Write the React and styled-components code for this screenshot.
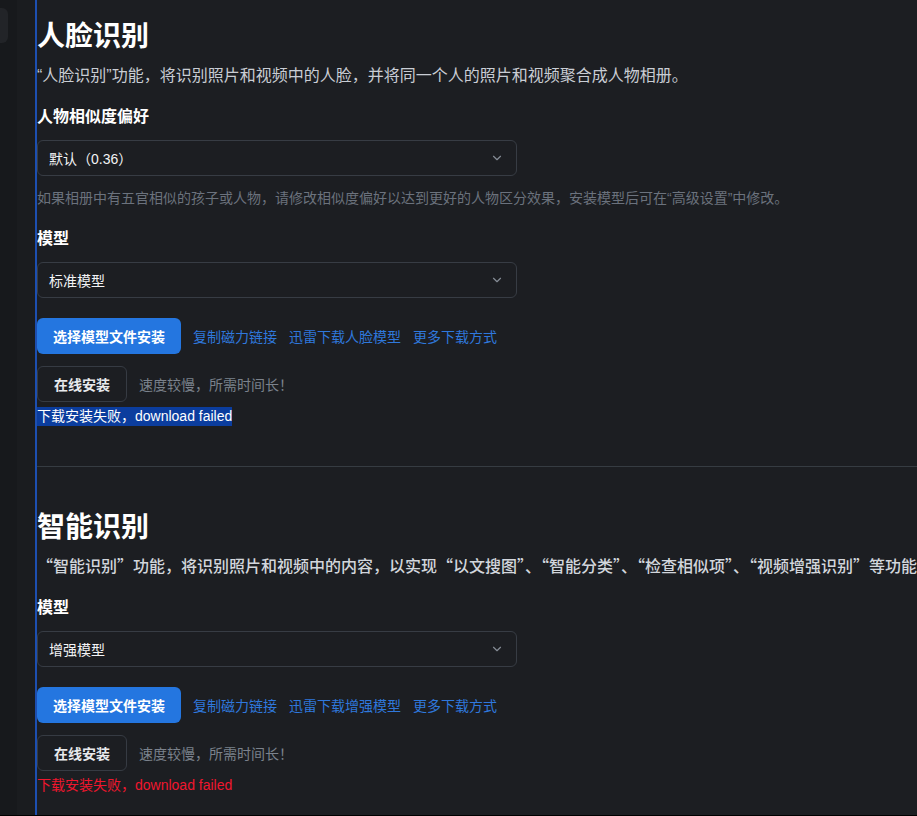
import styled, { createGlobalStyle } from 'styled-components'
import { ChevronDown } from 'lucide-react'

const GlobalStyle = createGlobalStyle`
  html, body {
    margin: 0;
    padding: 0;
    background: #000;
  }
  body {
    font-family: "Liberation Sans", "Noto Sans CJK SC", sans-serif;
    color: #e6e8eb;
  }
`

//////////
// Frame
const Frame = styled.div`
  display: flex;
  height: 815px;
  overflow: hidden;
  background: #1c1e22;
`
const SideRail = styled.div`
  width: 17px;
  flex: none;
  background: #17191c;
  padding-top: 8px;
  box-sizing: border-box;
`
const RailItem = styled.div`
  width: 8px;
  height: 35px;
  background: #222428;
  border-radius: 0 6px 6px 0;
`
const Gutter = styled.div`
  width: 18px;
  flex: none;
  background: #1a1c1f;
`
const Main = styled.div`
  flex: 1;
  min-width: 0;
  border-left: 2px solid #1d4fb0;
  background: #1c1e22;
  overflow: hidden;
`

//////////
// Section
const Section = styled.section`
  padding-top: ${(props) => props.top}px;
`
const Title = styled.h1`
  margin: 0;
  font-size: 28px;
  line-height: 40px;
  font-weight: 700;
  color: #fff;
`
const Desc = styled.p`
  margin: ${(props) => props.mt}px 0 0;
  font-size: 16px;
  line-height: 24px;
  color: ${(props) => (props.wide ? '#d2d6dc' : '#c9cdd4')};
  font-weight: ${(props) => (props.wide ? 500 : 400)};
  white-space: nowrap;
  font-family: ${(props) => (props.wide
    ? '"Noto Sans CJK SC", sans-serif'
    : '"Liberation Sans", "Noto Sans CJK SC", sans-serif')};
`
const Label = styled.div`
  margin-top: ${(props) => props.mt}px;
  font-size: 16px;
  line-height: 24px;
  font-weight: 700;
  color: #fff;
`
const Hint = styled.div`
  margin-top: 10px;
  font-size: 14px;
  line-height: 24px;
  color: #6b727d;
  white-space: nowrap;
`

// Select
const SelectBox = styled.div`
  margin-top: 11px;
  width: 480px;
  height: 36px;
  box-sizing: border-box;
  border: 1px solid #373c44;
  border-radius: 6px;
  padding: 0 12px 0 11px;
  display: flex;
  align-items: center;
  justify-content: space-between;
  font-size: 14px;
  color: #f2f3f5;
  & svg {
    color: #858c96;
  }
`

// Buttons
const ActionRow = styled.div`
  margin-top: ${(props) => props.mt}px;
  display: flex;
  align-items: center;
  gap: 12px;
`
const PrimaryButton = styled.button`
  height: 36px;
  padding: 0 16px;
  border: none;
  border-radius: 6px;
  background: #2476e0;
  color: #fff;
  font-family: inherit;
  font-size: 14px;
  font-weight: 700;
`
const GhostButton = styled.button`
  height: 36px;
  padding: 0 16px;
  border: 1px solid #363b43;
  border-radius: 6px;
  background: transparent;
  color: #e8eaed;
  font-family: inherit;
  font-size: 14px;
  font-weight: 700;
`
const LinkText = styled.a`
  font-size: 14px;
  color: #2f78dc;
  text-decoration: none;
`
const Muted = styled.span`
  font-size: 14px;
  color: #7b828c;
`
const ErrorText = styled.div`
  margin-top: ${(props) => props.mt}px;
  font-size: 14px;
  line-height: ${(props) => (props.selected ? 19 : 20)}px;
  & span {
    display: inline-block;
    color: ${(props) => (props.selected ? '#fff' : '#f0162e')};
    background: ${(props) => (props.selected ? '#0b3d9e' : 'transparent')};
  }
`
const Divider = styled.hr`
  margin: 40px 0 0;
  border: none;
  border-top: 1px solid #363c42;
`

const Select = ({ value }) => (
  <SelectBox>
    <span>{value}</span>
    <ChevronDown size={14} strokeWidth={2} />
  </SelectBox>
)

function App() {
  return (
    <>
      <GlobalStyle />
      <Frame>
        <SideRail><RailItem /></SideRail>
        <Gutter />
        <Main>
          <Section top={17}>
            <Title>人脸识别</Title>
            <Desc mt={7}>“人脸识别”功能，将识别照片和视频中的人脸，并将同一个人的照片和视频聚合成人物相册。</Desc>
            <Label mt={17}>人物相似度偏好</Label>
            <Select value="默认（0.36）" />
            <Hint>如果相册中有五官相似的孩子或人物，请修改相似度偏好以达到更好的人物区分效果，安装模型后可在“高级设置”中修改。</Hint>
            <Label mt={17}>模型</Label>
            <Select value="标准模型" />
            <ActionRow mt={20}>
              <PrimaryButton>选择模型文件安装</PrimaryButton>
              <LinkText>复制磁力链接</LinkText>
              <LinkText>迅雷下载人脸模型</LinkText>
              <LinkText>更多下载方式</LinkText>
            </ActionRow>
            <ActionRow mt={12}>
              <GhostButton>在线安装</GhostButton>
              <Muted>速度较慢，所需时间长！</Muted>
            </ActionRow>
            <ErrorText mt={5} selected><span>下载安装失败，download failed</span></ErrorText>
          </Section>
          <Divider />
          <Section top={41}>
            <Title>智能识别</Title>
            <Desc mt={5} wide>“智能识别”功能，将识别照片和视频中的内容，以实现“以文搜图”、“智能分类”、“检查相似项”、“视频增强识别”等功能。</Desc>
            <Label mt={19}>模型</Label>
            <Select value="增强模型" />
            <ActionRow mt={20}>
              <PrimaryButton>选择模型文件安装</PrimaryButton>
              <LinkText>复制磁力链接</LinkText>
              <LinkText>迅雷下载增强模型</LinkText>
              <LinkText>更多下载方式</LinkText>
            </ActionRow>
            <ActionRow mt={12}>
              <GhostButton>在线安装</GhostButton>
              <Muted>速度较慢，所需时间长！</Muted>
            </ActionRow>
            <ErrorText mt={4}><span>下载安装失败，download failed</span></ErrorText>
          </Section>
        </Main>
      </Frame>
    </>
  )
}

export default App
